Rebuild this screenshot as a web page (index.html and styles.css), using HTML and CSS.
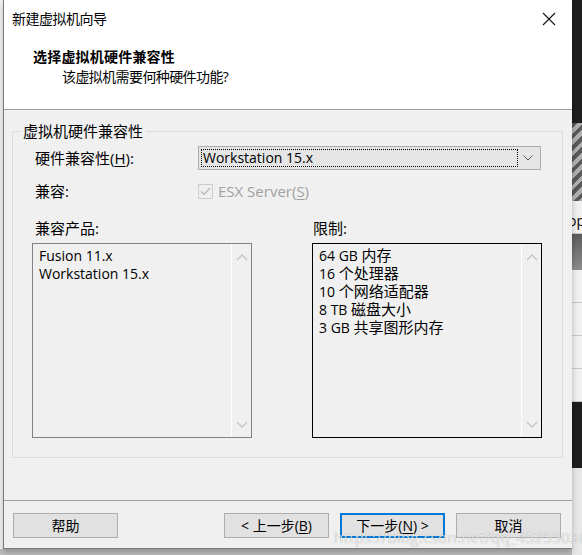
FILE: index.html
```html
<!DOCTYPE html>
<html lang="zh-CN">
<head>
  <meta charset="UTF-8" />
  <title>新建虚拟机向导</title>
  <link rel="stylesheet" href="styles.css">
</head>
<body>
  <div class="screen">
    <div class="dialog">
      <div class="titlebar">
        <span class="title">新建虚拟机向导</span>
        <svg class="close" width="14" height="14" viewBox="0 0 14 14">
          <path d="M1 1 L13 13 M13 1 L1 13" stroke="#111" stroke-width="1.1" fill="none"/>
        </svg>
      </div>
      <div class="header">
        <div class="heading">选择虚拟机硬件兼容性</div>
        <div class="subheading">该虚拟机需要何种硬件功能?</div>
      </div>

      <div class="body">
        <fieldset class="group">
          <legend>虚拟机硬件兼容性</legend>
          <div class="form-grid">
            <span class="label">硬件兼容性(<u>H</u>):</span>
            <div class="select">
              <span class="select-value">Workstation 15.x</span>
              <svg class="select-arrow" width="10" height="6" viewBox="0 0 10 6">
                <path d="M0.5 0.5 L5 5 L9.5 0.5" stroke="#555" fill="none"/>
              </svg>
            </div>
            <span class="label">兼容:</span>
            <div class="check">
              <span class="box">
                <svg width="13" height="13" viewBox="0 0 13 13">
                  <path d="M2 6.5 L5 9.5 L11 3" stroke="#b4b4b4" stroke-width="1.2" fill="none"/>
                </svg>
              </span>
              <span class="check-text">ESX Server(<u>S</u>)</span>
            </div>
          </div>

          <div class="lists">
            <div class="list-col left">
              <span class="label">兼容产品:</span>
              <div class="listbox">
                <ul class="items">
                  <li>Fusion 11.x</li>
                  <li>Workstation 15.x</li>
                </ul>
                <div class="scroll">
                  <svg width="12" height="7" viewBox="0 0 12 7"><path d="M1 6 L6 1 L11 6" stroke="#c4c4c4" stroke-width="1.3" fill="none"/></svg>
                  <svg width="12" height="7" viewBox="0 0 12 7"><path d="M1 1 L6 6 L11 1" stroke="#c4c4c4" stroke-width="1.3" fill="none"/></svg>
                </div>
              </div>
            </div>
            <div class="list-col right">
              <span class="label">限制:</span>
              <div class="listbox focused">
                <ul class="items">
                  <li>64 GB <span class="zh">内存</span></li>
                  <li>16 <span class="zh">个处理器</span></li>
                  <li>10 <span class="zh">个网络适配器</span></li>
                  <li>8 TB <span class="zh">磁盘大小</span></li>
                  <li>3 GB <span class="zh">共享图形内存</span></li>
                </ul>
                <div class="scroll">
                  <svg width="12" height="7" viewBox="0 0 12 7"><path d="M1 6 L6 1 L11 6" stroke="#c4c4c4" stroke-width="1.3" fill="none"/></svg>
                  <svg width="12" height="7" viewBox="0 0 12 7"><path d="M1 1 L6 6 L11 1" stroke="#c4c4c4" stroke-width="1.3" fill="none"/></svg>
                </div>
              </div>
            </div>
          </div>
        </fieldset>
      </div>

      <div class="footer">
        <button class="btn">帮助</button>
        <div class="spacer"></div>
        <button class="btn">&lt; 上一步(<u>B</u>)</button>
        <button class="btn primary">下一步(<u>N</u>) &gt;</button>
        <button class="btn">取消</button>
      </div>

      <span class="watermark">https://blog.csdn.net/qq_45255036</span>
    </div>

    <div class="backdrop">
      <div class="bd dark"></div>
      <div class="bd icon"></div>
      <div class="bd light"><span>op</span></div>
      <div class="bd mid"></div>
      <div class="bd light lined"></div>
      <div class="bd light lined"></div>
      <div class="bd light"><span>)</span></div>
      <div class="bd light"></div>
      <div class="bd dark tall"></div>
      <div class="bd pale"></div>
    </div>
  </div>
</body>
</html>
```

FILE: styles.css
```css
:root {
  --face: #f0f0f0;
  --text: #000;
  --muted: #a0a0a0;
  --btn-face: #e1e1e1;
  --btn-border: #adadad;
  --accent: #0078d7;
}

* {
  box-sizing: border-box;
}

body {
  margin: 0;
  width: 582px;
  height: 555px;
  overflow: hidden;
  background: #c9c9c9;
  font-family: "Open Sans", "Noto Sans CJK SC", sans-serif;
  font-size: 14px;
  color: var(--text);
}

u {
  text-decoration-thickness: 1px;
  text-underline-offset: 2px;
}

.screen {
  display: flex;
  height: 555px;
  padding-left: 3px;
  background: linear-gradient(#f4f4f4, #f4f4f4) left top / 3px 549px no-repeat, #bdbdbd;
}

/* dialog */

.dialog {
  position: relative;
  width: 569px;
  height: 549px;
  display: flex;
  flex-direction: column;
  background: var(--face);
  border-left: 1px solid #7a7a7a;
  border-bottom: 1px solid #7a7a7a;
  box-shadow: 0 3px 6px rgba(0, 0, 0, 0.25);
}

.titlebar {
  height: 38px;
  display: flex;
  align-items: center;
  justify-content: space-between;
  padding: 0 16px 1px 8px;
  background: #fff;
  line-height: 20px;
}

.title {
  font-size: 14px;
  letter-spacing: -0.5px;
}

.header {
  height: 72px;
  background: #fff;
  border-bottom: 1px solid #a0a0a0;
  padding: 9px 0 0 29px;
}

.heading {
  font-weight: bold;
  line-height: 20px;
  letter-spacing: 0.2px;
}

.subheading {
  padding-left: 29px;
  line-height: 20px;
  letter-spacing: -0.6px;
}

.body {
  flex: 1;
  padding: 12px 10px 0 8px;
}

.group {
  margin: 0;
  height: 336px;
  padding: 6px 20px 0 20px;
  border: 1px solid #dcdcdc;
}

.group legend {
  margin-left: -12px;
  padding: 0 3px 0 2px;
  font-size: 15px;
  line-height: 18px;
}

.form-grid {
  display: grid;
  grid-template-columns: 165px 343px;
  grid-template-rows: 24px 32px;
  align-items: center;
  row-gap: 5px;
}

.label {
  padding-left: 2px;
  font-size: 15px;
  line-height: 18px;
}

.select {
  height: 24px;
  display: flex;
  align-items: center;
  justify-content: space-between;
  padding: 2px 7px 2px 2px;
  background: #e5e5e5;
  border: 1px solid var(--btn-border);
}

.select-value {
  flex: 0 0 317px;
  height: 18px;
  line-height: 16px;
  padding-left: 1px;
  border: 1px dotted #000;
}

.check {
  display: flex;
  align-items: center;
  gap: 5px;
}

.box {
  width: 15px;
  height: 15px;
  display: flex;
  align-items: center;
  justify-content: center;
  border: 1px solid #cccccc;
  background: var(--face);
}

.check-text {
  color: var(--muted);
  font-size: 15px;
  line-height: 18px;
}

/* lists */

.lists {
  display: flex;
  gap: 60px;
  margin-top: 12px;
  margin-left: -1px;
}

.list-col {
  display: flex;
  flex-direction: column;
  gap: 6px;
}

.list-col.left {
  width: 220px;
}

.list-col.left .label {
  padding-left: 3px;
}

.list-col.right {
  width: 230px;
}

.list-col.right .label {
  padding-left: 1px;
}

.listbox {
  height: 195px;
  display: flex;
  border: 1px solid #828282;
  background: var(--face);
}

.listbox.focused {
  border-color: #000;
}

.items {
  flex: 1;
  list-style: none;
  margin: 0;
  padding: 3px 6px;
  line-height: 18px;
}

.items li {
  height: 18px;
}

.zh {
  font-size: 15px;
  line-height: 1;
}

.scroll {
  width: 20px;
  display: flex;
  flex-direction: column;
  align-items: center;
  justify-content: space-between;
  padding: 10px 0 9px;
  border-left: 1px solid #fff;
}

/* footer */

.footer {
  height: 48px;
  display: flex;
  align-items: flex-start;
  gap: 11px;
  padding: 12px 11px 0 9px;
  border-top: 1px solid #a0a0a0;
}

.spacer {
  flex: 1;
}

.btn {
  width: 105px;
  height: 25px;
  padding: 0;
  font: inherit;
  line-height: 20px;
  color: var(--text);
  background: var(--btn-face);
  border: 1px solid var(--btn-border);
}

.btn.primary {
  border: 2px solid var(--accent);
}

.watermark {
  position: absolute;
  left: 330px;
  top: 527px;
  font-size: 15px;
  letter-spacing: 0.3px;
  color: rgba(255, 255, 255, 0.75);
  text-shadow: 0 0 1px rgba(0, 0, 0, 0.35);
  white-space: nowrap;
}

/* window behind the dialog */

.backdrop {
  flex: 1;
  display: flex;
  flex-direction: column;
  overflow: hidden;
}

.bd {
  height: 40px;
  font-size: 14px;
  line-height: 40px;
}

.bd span {
  margin-left: -4px;
}

.bd.dark {
  height: 123px;
  background: #1e1e1e;
}

.bd.dark.tall {
  height: 66px;
}

.bd.icon {
  height: 78px;
  background: repeating-linear-gradient(135deg, #5a5a5a 0 4px, #b0b0b0 4px 8px);
}

.bd.light {
  height: 33px;
  background: #f0f0f0;
  border-bottom: 1px solid #c8c8c8;
}

.bd.mid {
  height: 36px;
  background: linear-gradient(#5c5c5c, #8d8d8d);
}

.bd.pale {
  flex: 1;
  background: #e8e8e8;
}
```
